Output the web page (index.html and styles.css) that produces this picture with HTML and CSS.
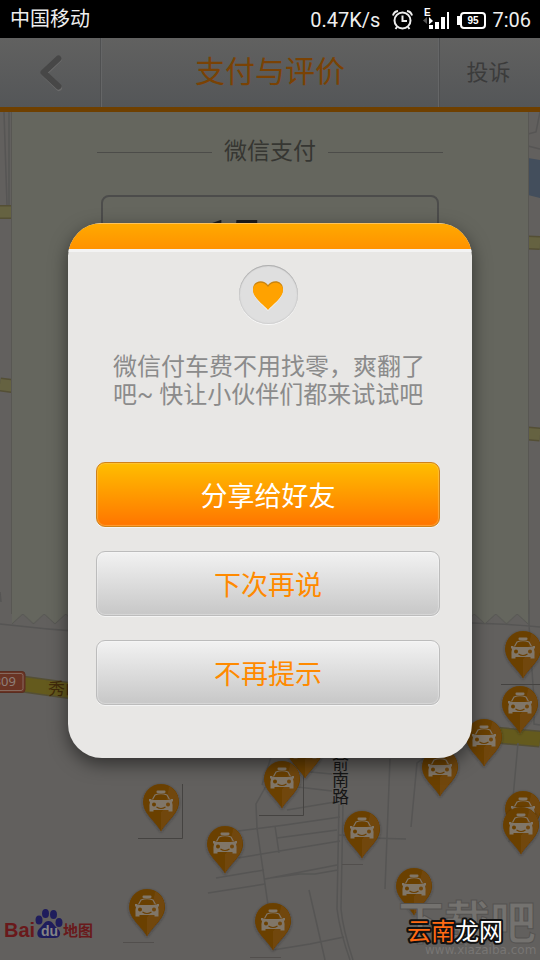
FILE: index.html
```
<!DOCTYPE html>
<html lang="zh-CN">
<head>
  <meta charset="UTF-8">
  <meta name="viewport" content="width=device-width, initial-scale=1.0">
  <title>支付与评价</title>
  <link rel="stylesheet" href="styles.css">
</head>
<body>
  <div class="status-bar">
    <span class="carrier">中国移动</span>
    <span class="speed">0.47K/s</span>
    <svg width="25" height="24" viewBox="389 8 25 24" fill="none" stroke="#eee" stroke-width="2">
      <circle cx="402.500" cy="20.500" r="8"/>
      <path d="M402.500 15.500v5.500h4.500M393 15.500q1-4 5-4.500M412 15.500q-1-4-5-4.500"/>
      <path d="M397 27l-1.500 2M408 27l1.500 2"/>
    </svg>
    <svg width="29" height="24" viewBox="420 8 29 24">
      <text class="net-type" x="424" y="16">E</text>
      <path d="M427 17v7l-4-3.500z" fill="#555"/>
      <path d="M429 17l4 4-4 3.500zM429 25h4v4h-4zM435 22h4v7h-4zM441 17h4v12h-4zM447 12h4v17h-4z" fill="#fff"/>
    </svg>
    <svg width="31" height="24" viewBox="458 8 31 24">
      <rect x="464" y="13" width="24" height="15" rx="3" fill="none" stroke="#fff" stroke-width="2"/>
      <path d="M460 16h3v9h-3z" fill="#fff"/>
      <text class="battery-level" x="476" y="24">95</text>
    </svg>
    <span>7:06</span>
  </div>

  <header class="header">
    <button class="back" aria-label="返回">
      <svg width="28" height="40" viewBox="36 53 28 40" fill="none" stroke-width="6" stroke-linecap="round" stroke-linejoin="round">
        <path d="M59 59L44 73.500L59 88" stroke="#6b6b6b"/>
        <path d="M58.500 58.500L43.500 72.500L58.500 86.500" stroke="#474747"/>
      </svg>
    </button>
    <h1>支付与评价</h1>
    <button class="complain">投诉</button>
  </header>

  <main class="content">
    <svg class="map" viewBox="0 112 540 848" preserveAspectRatio="xMidYMin slice">
      <defs>
        <filter id="pin-shadow" x="-30%" y="-20%" width="160%" height="150%">
          <feDropShadow dx="0" dy="1" stdDeviation="1.500" flood-color="#222" flood-opacity=".5"/>
        </filter>
        <g id="pin">
          <g filter="url(#pin-shadow)">
            <path d="M0 47.500C-4 39-18 30-18 18A18 18 0 0 1 18 18C18 30 4 39 0 47.500Z" fill="#6b4002"/>
            <path d="M0 47.500C4 39 17.500 30 17.500 18A17.500 17.500 0 0 0 8 2Q4 26 0 28Z" fill="#714608"/>
          </g>
          <rect x="-4.500" y="6.500" width="9" height="2.500" rx="1" fill="#807668"/>
          <path d="M-8.500 15.500L-6 11Q0 8.500 6 11L8.500 15.500" fill="none" stroke="#807668" stroke-width="1.200"/>
          <path fill="#807668" fill-rule="evenodd" d="M-12 15H-10L-9 16H9L10 15H12V17L11 18Q12 21 11.500 25V27.500H7.500V26H-7.500V27.500H-11.500V25Q-12 21-11 18L-12 17ZM-9 20.500A2 2 0 1 0-5 20.500A2 2 0 1 0-9 20.500ZM5 20.500A2 2 0 1 0 9 20.500A2 2 0 1 0 5 20.500Z"/>
          <path d="M-4.500 23Q0 26 4.500 23" fill="none" stroke="#6b4002" stroke-width="1.200"/>
        </g>
      </defs>

      <!-- water and main roads -->
      <path d="M528 158L540 160V198L528 195Z" fill="#434e5c"/>
      <g stroke="#544f35" stroke-width="14">
        <path d="M0 212H12M0 384.500L12 386M528 242.500L540 243M528 433.500L540 434.500"/>
        <path d="M0 681L80 692M460 732L540 739" stroke-width="17"/>
      </g>
      <g stroke="#656241" stroke-width="11">
        <path d="M0 212H12M0 384.500L12 386M528 242.500L540 243M528 433.500L540 434.500"/>
        <path d="M0 681L80 692M460 732L540 739" stroke="#645a1d" stroke-width="14"/>
      </g>

      <!-- side streets -->
      <g fill="none" stroke="#565554" stroke-width="1.500">
        <path d="M4 112L7 205M9 112V205M528 134L536 132L540 112M528 146L540 149M0 592L1 602"/>
        <path d="M0 624Q50 630 100 633M472 623Q510 624 540 627M529 600V625L534 700V724L540 725"/>
        <path d="M518 743L509 842"/>
        <path d="M270 779L256 804L257 828L268 905L275 940M275 745L262 785"/>
        <path d="M238 831L285 825L340 817M238 858L340 841M216 878L264 870M208 893L265 884M265 879L337 865M277 838L337 830M275 826L279 853M270 878L300 874L315 874L338 870"/>
        <path d="M300 771L332 774M298 787L332 791M287 810L335 802"/>
        <path d="M339 804L337 909Q340 932 350 960M343 804L341 909Q343 930 353 960"/>
        <path d="M339 835L370 838L406 839M390 759L385 889M411 827L417 763L424 758"/>
        <path d="M309 890L325 960M273 950L310 944L344 937"/>
      </g>
      <path d="M138 838.500H182.500V784M259 815.500H303.500V775M501 684.500H540" fill="none" stroke="#454341"/>
      <path d="M123 942.500H154M250 957.500H281M342 864.500H363" stroke="#524f4d"/>

      <!-- road labels -->
      <rect x="-10" y="671.500" width="35" height="21" rx="3" fill="#6a3424" stroke="#5a2d20"/>
      <rect x="-8" y="673.500" width="31" height="17" rx="2" fill="none" stroke="#85695e"/>
      <text class="road-number" x="16" y="686">309</text>
      <text class="road-name yellow" x="48" y="695">秀山</text>
      <text class="road-name" x="332" y="769">俞</text>
      <text class="road-name" x="332" y="786">南</text>
      <text class="road-name" x="332" y="803">路</text>

      <!-- taxis -->
      <use href="#pin" x="523" y="631"/>
      <use href="#pin" x="520" y="686"/>
      <use href="#pin" x="484" y="719"/>
      <use href="#pin" x="440" y="749"/>
      <use href="#pin" x="305" y="731"/>
      <use href="#pin" x="282" y="761"/>
      <use href="#pin" x="161" y="784"/>
      <use href="#pin" x="225" y="826"/>
      <use href="#pin" x="362" y="811"/>
      <use href="#pin" x="523" y="791"/>
      <use href="#pin" x="521" y="807"/>
      <use href="#pin" x="147" y="889"/>
      <use href="#pin" x="273" y="903"/>
      <use href="#pin" x="414" y="868"/>

      <!-- map provider -->
      <text class="baidu-bai" x="4" y="937">Bai</text>
      <g fill="#1f1d5c">
        <ellipse cx="39" cy="920" rx="3.500" ry="4.500"/>
        <ellipse cx="45.500" cy="913.500" rx="3.500" ry="4.500"/>
        <ellipse cx="53.500" cy="914.500" rx="3.500" ry="4.500"/>
        <ellipse cx="59" cy="922.500" rx="3.500" ry="4.500"/>
        <path d="M48.500 921C53 921 54 926 58 929C62 933 60 938 55 938H42C37 938 36 933 39 929C43 926 44 921 48.500 921Z"/>
      </g>
      <text class="baidu-du" x="41" y="936">du</text>
      <text class="baidu-map" x="63" y="936">地图</text>

      <!-- watermarks -->
      <text class="mark-big" x="398" y="939">下载吧</text>
      <text class="mark-url" x="425" y="954">www.xiazaiba.com</text>
      <text class="mark-site" x="407" y="940"><tspan fill="#ff6a13">云南</tspan><tspan fill="#fff">龙网</tspan></text>
    </svg>

    <section class="receipt">
      <div class="receipt-body">
        <h2>微信支付</h2>
        <div class="amount">15</div>
      </div>
      <svg class="teeth" width="100%" height="11">
        <defs>
          <pattern id="tooth" width="21.500" height="11" patternUnits="userSpaceOnUse">
            <path d="M0 0H21.500V10L10.750 0L0 10Z" fill="#65665e"/>
            <path d="M0 10L10.750 0L21.500 10" fill="none" stroke="#575753"/>
          </pattern>
        </defs>
        <rect width="100%" height="11" fill="url(#tooth)"/>
      </svg>
    </section>
  </main>

  <div class="overlay">
    <div class="dialog" role="dialog" aria-describedby="share-text">
      <div class="dialog-top"></div>
      <div class="heart">
        <svg width="34" height="34" viewBox="0 0 34 34">
          <path d="M17 32C13 27 2 20 2 11C2 2 13 0 17 7C21 0 32 2 32 11C32 20 21 27 17 32Z" fill="#f5f5f5"/>
          <path d="M17 30C13 25 2 19 2 10C2 1 13 0 17 6C21 0 32 1 32 10C32 19 21 25 17 30Z" fill="#c98410"/>
          <path d="M17 31C13 26 2 19 2 11C2 3 13 1 17 8C21 1 32 3 32 11C32 19 21 26 17 31Z" fill="#ffa200"/>
        </svg>
      </div>
      <p id="share-text">微信付车费不用找零，爽翻了<br>吧~ 快让小伙伴们都来试试吧</p>
      <div class="actions">
        <button class="btn primary">分享给好友</button>
        <button class="btn">下次再说</button>
        <button class="btn">不再提示</button>
      </div>
    </div>
  </div>
</body>
</html>
```
FILE: styles.css
```
* {
  box-sizing: border-box;
}
body {
  margin: 0;
  min-height: 100vh;
  display: flex;
  flex-direction: column;
  position: relative;
  background: #62605e;
  font-family: Roboto, "Noto Sans CJK SC", sans-serif;
}
button {
  margin: 0;
  padding: 0;
  border: none;
  background: none;
  font-family: inherit;
  cursor: pointer;
}
h1, h2, p {
  margin: 0;
  font-weight: normal;
}

.status-bar {
  height: 38px;
  padding: 2px 9px 0;
  display: flex;
  align-items: center;
  gap: 6px;
  background: #000;
  color: #eee;
  font-size: 20px;
  line-height: 36px;
}
.carrier {
  flex: 1;
  padding-left: 1px;
  line-height: 34px;
  align-self: flex-start;
}
.speed {
  margin-right: 3px;
}
.net-type {
  font: bold 10px "Liberation Sans", sans-serif;
  fill: #fff;
}
.battery-level {
  font: bold 10px "Liberation Sans", sans-serif;
  fill: #fff;
  text-anchor: middle;
}

.header {
  height: 74px;
  display: flex;
  border-bottom: 5px solid #6f4000;
  background: linear-gradient(#616160, #545658);
}
.header h1 {
  flex: 1;
  color: #7a4204;
  font-size: 30px;
  line-height: 67px;
  text-align: center;
}
.back, .complain {
  width: 101px;
}
.back {
  border-right: 1px solid #4f5051;
  box-shadow: 1px 0 #656667;
}
.back svg {
  display: block;
  margin: 0 auto;
}
.complain {
  padding: 0 3px 6px 0;
  border-left: 1px solid #4f5051;
  box-shadow: -1px 0 #656667;
  color: #3b3b3b;
  font-size: 22px;
}

.content {
  flex: 1;
  position: relative;
}
.map {
  position: absolute;
  top: 0;
  left: 0;
  width: 100%;
  height: 100%;
}
.receipt {
  position: relative;
  margin: 0 12px;
}
.receipt-body {
  padding: 24px 85px 0;
  min-height: 502px;
  background: #65665e;
  box-shadow: -1px 0 #585753, 1px 0 #585753;
}
.receipt h2 {
  display: flex;
  align-items: center;
  gap: 12px;
  color: #363632;
  font-size: 23px;
  line-height: 32px;
}
.receipt h2::before, .receipt h2::after {
  content: "";
  flex: 1;
  height: 1px;
  background: #4c4c49;
}
.amount {
  margin: 27px 4px 0;
  padding: 13px 98px;
  border: 2px solid #4c4c4b;
  border-radius: 8px;
  color: #1c1c1c;
  font-size: 52px;
  font-weight: bold;
  line-height: 60px;
}
.teeth {
  display: block;
}

.road-number {
  font: 13px "Noto Sans", sans-serif;
  fill: #8d7e78;
  text-anchor: end;
}
.road-name {
  font: 17px "Noto Sans CJK SC", sans-serif;
  fill: #151515;
}
.road-name.yellow {
  fill: #412b0b;
}
.baidu-bai {
  font: bold 20px "Liberation Sans", sans-serif;
  fill: #69191b;
}
.baidu-du {
  font: bold 14px "Liberation Sans", sans-serif;
  fill: #858585;
}
.baidu-map {
  font: bold 15px "Noto Sans CJK SC", sans-serif;
  fill: #69191b;
}
.mark-big {
  font: bold 46px "Noto Sans CJK SC", sans-serif;
  fill: #74726f;
  stroke: #555351;
}
.mark-url {
  font: 12px "DejaVu Sans", sans-serif;
  fill: #777573;
}
.mark-site {
  font: 24px "Noto Sans CJK SC", sans-serif;
  stroke: #111;
  stroke-width: 4px;
  stroke-linejoin: round;
  paint-order: stroke;
}

.overlay {
  position: absolute;
  top: 38px;
  right: 0;
  bottom: 0;
  left: 0;
  display: flex;
  align-items: center;
  padding: 0 68px 17px;
}
.dialog {
  flex: 1;
  padding-bottom: 53px;
  border-radius: 34px;
  overflow: hidden;
  background: #e8e7e5;
  box-shadow: 0 6px 18px rgba(0, 0, 0, .5);
}
.dialog-top {
  height: 29px;
  border-top: 1px solid #ffc35c;
  border-bottom: 3px solid #f3f3f3;
  background: linear-gradient(#ffa900, #ff9200);
}
.heart {
  width: 59px;
  height: 59px;
  margin: 13px auto 29px;
  padding-top: 2px;
  display: flex;
  align-items: center;
  justify-content: center;
  transform: translateX(-2px);
  border-radius: 50%;
  background: #dfdfdf;
  box-shadow: inset 0 1px 1px #acacac, inset 0 0 1px 1px #d0d0d0, 0 1px #f8f8f8;
}
.dialog p {
  color: #8b8b8b;
  font-size: 24px;
  line-height: 28px;
  padding-left: 45px;
  white-space: nowrap;
}
.actions {
  display: flex;
  flex-direction: column;
  gap: 24px;
  padding: 53px 32px 0 28px;
}
.btn {
  height: 65px;
  border: 1px solid #bcbcbc;
  border-radius: 9px;
  background: linear-gradient(#f2f2f2, #c7c7c7);
  box-shadow: 0 1px #f4f4f4, inset 0 0 1px 1px rgba(255, 255, 255, .3);
  color: #ff8a00;
  font-size: 27px;
}
.btn.primary {
  border-color: #d08218;
  background: linear-gradient(#ffbe00, #ff7500);
  box-shadow: 0 1px #f4f4f4, inset 0 0 1px 1px rgba(255, 200, 100, .5);
  color: #fff;
}
```
